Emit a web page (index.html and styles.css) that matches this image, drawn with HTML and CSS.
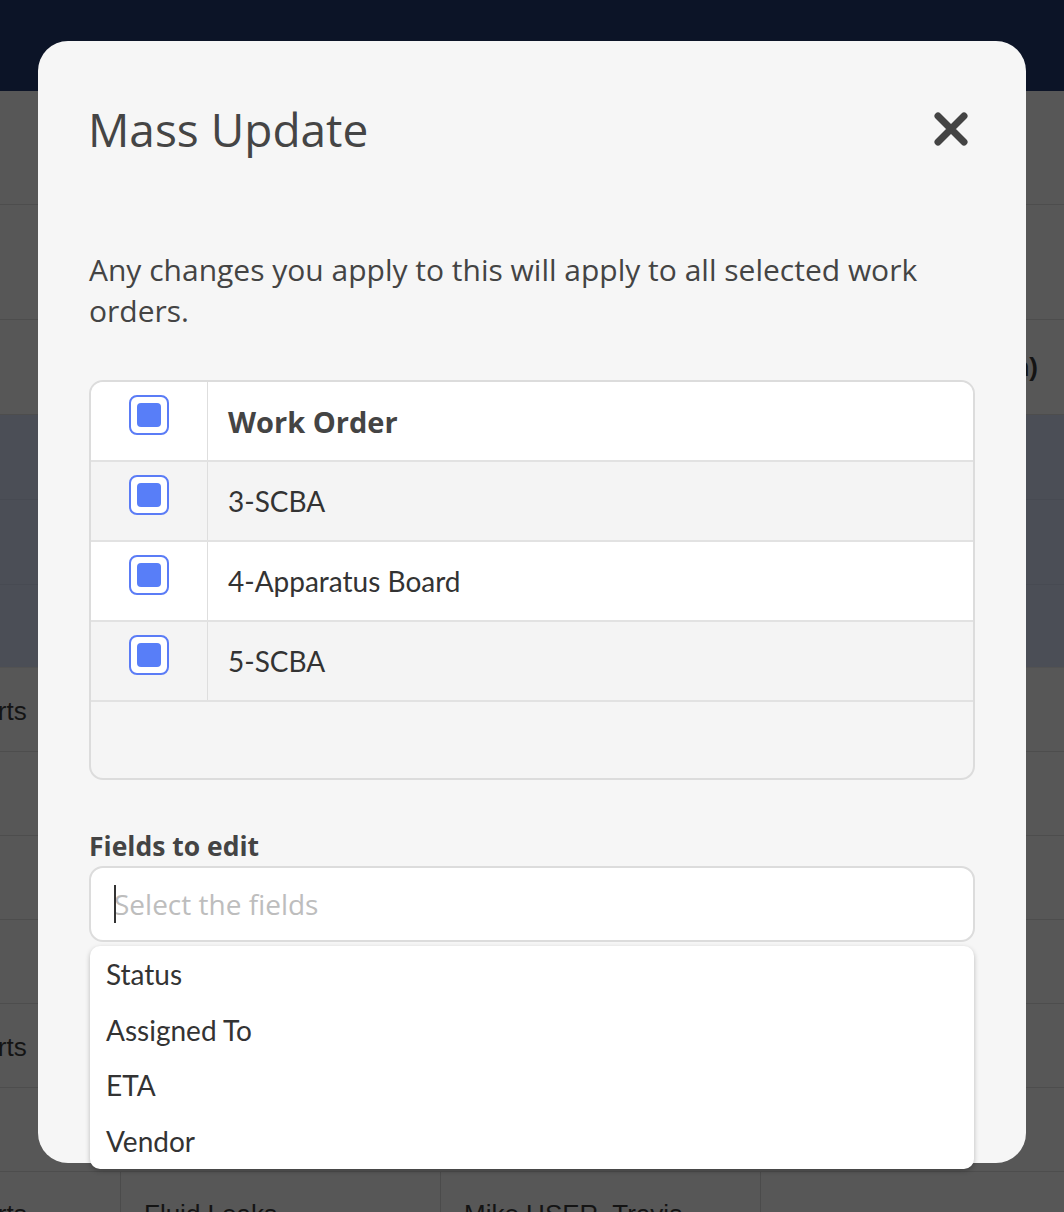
FILE: index.html
```html
<!DOCTYPE html>
<html lang="en">
<head>
<meta charset="utf-8">
<title>Mass Update</title>
<link rel="stylesheet" href="styles.css">
</head>
<body>
<div class="page">
  <header class="topbar"></header>
  <div class="bg-table">
    <div class="bg-row r114"></div>
    <div class="bg-row r115"></div>
    <div class="bg-row r95"><span class="bg-head">Duration (min)</span></div>
    <div class="bg-row sel r85"></div>
    <div class="bg-row sel r85"></div>
    <div class="bg-row sel r83 last-sel"></div>
    <div class="bg-row r84"><span class="bg-cut">Parts</span></div>
    <div class="bg-row r84"></div>
    <div class="bg-row r84"></div>
    <div class="bg-row r84"></div>
    <div class="bg-row r84"><span class="bg-cut">Parts</span></div>
    <div class="bg-row r84"></div>
    <div class="bg-row cols">
      <div class="bg-cell c1"><span class="bg-cut">Parts</span></div>
      <div class="bg-cell c2">Fluid Leaks</div>
      <div class="bg-cell c3">Mike USER, Travis</div>
      <div class="bg-cell c4"></div>
    </div>
  </div>
</div>

<div class="modal">
  <div class="modal-head">
    <h1 class="modal-title">Mass Update</h1>
    <button class="close-btn" aria-label="Close">
      <svg width="34" height="34" viewBox="0 0 34 34"><path d="M4 4 L30 30 M30 4 L4 30" stroke="#444" stroke-width="7" stroke-linecap="round" fill="none"/></svg>
    </button>
  </div>
  <p class="intro">Any changes you apply to this will apply to all selected work orders.</p>

  <div class="wo-table">
    <div class="wo-row head">
      <div class="wo-check"><span class="cb"><span class="cb-fill"></span></span></div>
      <div class="wo-name">Work Order</div>
    </div>
    <div class="wo-row alt">
      <div class="wo-check"><span class="cb"><span class="cb-fill"></span></span></div>
      <div class="wo-name">3-SCBA</div>
    </div>
    <div class="wo-row">
      <div class="wo-check"><span class="cb"><span class="cb-fill"></span></span></div>
      <div class="wo-name">4-Apparatus Board</div>
    </div>
    <div class="wo-row alt">
      <div class="wo-check"><span class="cb"><span class="cb-fill"></span></span></div>
      <div class="wo-name">5-SCBA</div>
    </div>
    <div class="wo-empty"></div>
  </div>

  <label class="field-label">Fields to edit</label>
  <div class="select-wrap">
    <div class="select-input"><span class="caret"></span><span class="placeholder">Select the fields</span></div>
    <ul class="dropdown">
      <li>Status</li>
      <li>Assigned To</li>
      <li>ETA</li>
      <li>Vendor</li>
    </ul>
  </div>
</div>
</body>
</html>
```

FILE: styles.css
```css
* { box-sizing: border-box; }
html, body { margin: 0; padding: 0; }
body {
  width: 1064px;
  height: 1212px;
  overflow: hidden;
  background: #575757;
  font-family: "Liberation Sans", Arial, sans-serif;
}
.page { width: 1064px; }
.topbar { height: 91px; background: #0c1427; }
.bg-row {
  border-bottom: 1px solid #4d4d4d;
  background: #575757;
  display: flex;
  align-items: center;
  font-size: 26px;
  color: #141414;
}
.r114 { height: 114px; }
.r115 { height: 115px; }
.r95 { height: 95px; justify-content: flex-end; padding-right: 26px; }
.r85 { height: 85px; }
.r83 { height: 83px; }
.r84 { height: 84px; }
.r84 .bg-cut { margin-top: 4px; }
.sel { background: #4b4e56; border-bottom-color: #474a52; }
.last-sel { border-bottom-color: #525252; }
.bg-head { font-weight: bold; }
.bg-cut { display: inline-block; margin-left: -34px; }
.cols { height: 84px; align-items: stretch; }
.bg-cell { border-left: 1px solid #4b4b4b; padding-top: 27px; }
.bg-cell.c1 { width: 120px; border-left: none; }
.bg-cell.c2 { width: 320px; padding-left: 23px; }
.bg-cell.c3 { width: 320px; padding-left: 23px; }
.bg-cell.c4 { flex: 1; }

.modal {
  position: absolute;
  left: 38px;
  top: 41px;
  width: 988px;
  height: 1122px;
  background: #f6f6f6;
  border-radius: 30px;
  padding: 58px 51px 0 51px;
  font-family: "Open Sans", "Noto Sans", sans-serif;
  color: #444;
}
.modal-head {
  display: flex;
  justify-content: space-between;
  align-items: center;
  height: 60px;
}
.modal-title {
  margin: 0 0 0 -1px;
  font-size: 46px;
  font-weight: 400;
  line-height: 60px;
  color: #454545;
}
.close-btn {
  border: none;
  background: none;
  padding: 0;
  margin-right: 7px;
  width: 34px;
  height: 34px;
  display: flex;
}
.intro {
  margin: 90px 0 0 0;
  font-size: 30px;
  line-height: 41px;
  color: #444;
}
.wo-table {
  margin-top: 49px;
  border: 2px solid #dcdcdc;
  border-radius: 14px;
  overflow: hidden;
  background: #f5f5f5;
}
.wo-row {
  display: flex;
  height: 80px;
  border-bottom: 2px solid #e2e2e2;
  background: #fff;
}
.wo-row.alt { background: #f4f4f4; }
.wo-check {
  width: 117px;
  border-right: 1px solid #dedede;
  display: flex;
  justify-content: center;
  align-items: flex-start;
  padding-top: 13px;
}
.cb {
  width: 40px;
  height: 40px;
  border: 2px solid #5b7cf6;
  border-radius: 8px;
  background: #fff;
  display: flex;
  align-items: center;
  justify-content: center;
}
.cb-fill {
  width: 24px;
  height: 24px;
  border-radius: 4px;
  background: #587ef8;
}
.wo-name {
  display: flex;
  align-items: center;
  padding-left: 20px;
  font-family: "Lato", sans-serif;
  font-size: 28px;
  color: #333;
}
.head .wo-name {
  font-family: "Open Sans", sans-serif;
  font-weight: 700;
  font-size: 29px;
  color: #444;
}
.wo-empty { height: 76px; }

.field-label {
  display: block;
  margin-top: 48px;
  font-size: 26.5px;
  font-weight: 700;
  line-height: 36px;
  color: #444;
}
.select-wrap {
  position: relative;
  margin-top: 2px;
}
.select-input {
  height: 76px;
  border: 2px solid #dcdcdc;
  border-radius: 14px;
  background: #fff;
  display: flex;
  align-items: center;
  padding-left: 23px;
  position: relative;
}
.caret {
  position: absolute;
  left: 23px;
  top: 17px;
  width: 2px;
  height: 38px;
  background: #333;
}
.placeholder {
  font-size: 28px;
  color: #bdbdbd;
}
.dropdown {
  position: absolute;
  left: 1px;
  right: 1px;
  top: calc(100% + 4px);
  margin: 0;
  padding: 1px 0 0 0;
  list-style: none;
  background: #fff;
  border-radius: 10px;
  box-shadow: 0 2px 5px rgba(0,0,0,0.25);
  font-family: "Lato", sans-serif;
  font-size: 28px;
  color: #333;
}
.dropdown li {
  height: 55.5px;
  line-height: 55.5px;
  padding-left: 16px;
}
```
